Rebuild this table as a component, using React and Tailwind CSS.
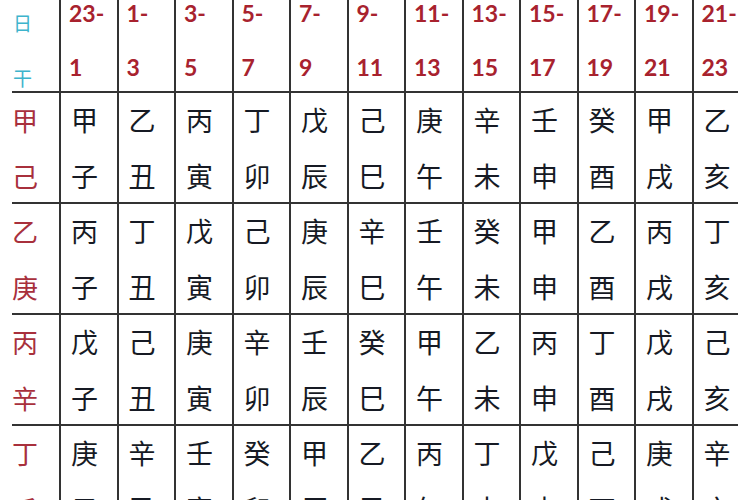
const hours = ["23-1", "1-3", "3-5", "5-7", "7-9", "9-11", "11-13", "13-15", "15-17", "17-19", "19-21", "21-23"];

const rows = [
    { head: ["甲", "己"], stems: "甲乙丙丁戊己庚辛壬癸甲乙" },
    { head: ["乙", "庚"], stems: "丙丁戊己庚辛壬癸甲乙丙丁" },
    { head: ["丙", "辛"], stems: "戊己庚辛壬癸甲乙丙丁戊己" },
    { head: ["丁", "壬"], stems: "庚辛壬癸甲乙丙丁戊己庚辛" },
];

const branches = "子丑寅卯辰巳午未申酉戌亥";

const cjk = "font-['Noto_Sans_CJK_SC',sans-serif]";

function App() {
    return (
        <div className="w-[750px] h-[500px] overflow-hidden bg-white">
            {/* header */}
            <div className="flex h-[93px] mx-[12px] border-b-2 border-[#333]">
                <div className={`w-[47px] shrink-0 flex flex-col gap-[33px] pt-[12px] pl-[1px] text-[19px] text-[#3db4cc] leading-[22px] ${cjk}`}>
                    <div>日</div>
                    <div>干</div>
                </div>
                {hours.map((h, i) => {
                    const [a, b] = h.split("-");
                    return (
                        <div key={i} className={`${i === 11 ? "w-[47px]" : "w-[57.5px]"} shrink-0 flex flex-col gap-[32px] pt-[2px] border-l-2 border-[#333] pl-[8px] font-['Lato',sans-serif] font-bold text-[23px] text-[#a8222e] leading-[22px]`}>
                            <div>{a}-</div>
                            <div>{b}</div>
                        </div>
                    );
                })}
            </div>

            {rows.map((r, ri) => (
                <div key={ri} className="flex h-[111px] mx-[12px] border-b-2 border-[#333]">
                    <div className={`w-[47px] shrink-0 flex flex-col justify-center text-[26px] text-[#a8303c] leading-[56px] ${cjk}`}>
                        <div>{r.head[0]}</div>
                        <div>{r.head[1]}</div>
                    </div>
                    {[...r.stems].map((s, i) => (
                        <div key={i} className={`${i === 11 ? "w-[47px]" : "w-[57.5px]"} shrink-0 border-l-2 border-[#333] pl-[10px] flex flex-col justify-center text-[27px] text-[#161a24] leading-[56px] ${cjk}`}>
                            <div>{s}</div>
                            <div>{branches[i]}</div>
                        </div>
                    ))}
                </div>
            ))}
        </div>
    );
}

export default App;
